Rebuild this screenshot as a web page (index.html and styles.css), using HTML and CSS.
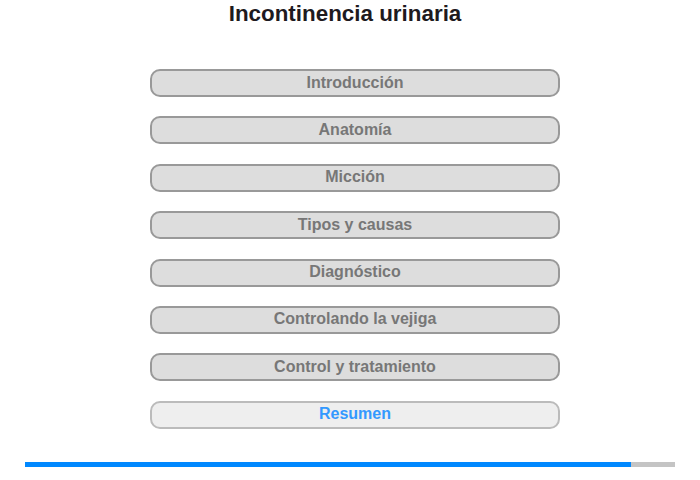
FILE: index.html
```html
<!DOCTYPE html>
<html lang="es">
<head>
    <meta charset="UTF-8">
    <meta name="viewport" content="width=device-width, initial-scale=1.0">
    <title>Incontinencia urinaria</title>
    <link rel="stylesheet" href="styles.css">
</head>
<body>

<h1 class="title">Incontinencia urinaria</h1>

<div class="menu">
    <button class="menu-btn">Introducción</button>
    <button class="menu-btn">Anatomía</button>
    <button class="menu-btn">Micción</button>
    <button class="menu-btn">Tipos y causas</button>
    <button class="menu-btn">Diagnóstico</button>
    <button class="menu-btn">Controlando la vejiga</button>
    <button class="menu-btn">Control y tratamiento</button>
    <button class="menu-btn current">Resumen</button>
</div>

<div class="progress">
    <div class="progress-fill" style="width: 93.2%;"></div>
</div>

</body>
</html>
```

FILE: styles.css
```css
body {
    font-family: "Liberation Sans", Arial, sans-serif;
    background-color: #ffffff;
    margin: 0;
    padding: 0;
}

.title {
    margin: 0;
    padding: 1px 10px 0 0;
    font-size: 22.4px;
    line-height: 26px;
    font-weight: bold;
    color: #1e1a1e;
    text-align: center;
}

.menu {
    display: flex;
    flex-direction: column;
    align-items: center;
    gap: 19.4px;
    margin-top: 42px;
    padding-left: 10px;
}

.menu-btn {
    display: block;
    width: 410px;
    height: 28px;
    padding: 0 0 1px 0;
    font-family: inherit;
    font-size: 16px;
    line-height: 22px;
    font-weight: bold;
    color: #777777;
    background-color: #dddddd;
    border: 2px solid #999999;
    border-radius: 10px;
    cursor: pointer;
}

.menu-btn.current {
    color: #3399ff;
    background-color: #eeeeee;
    border-color: #bbbbbb;
}

.progress {
    width: 650px;
    height: 5px;
    margin: 33px auto 0;
    background-color: #c4c4c4;
}

.progress-fill {
    height: 100%;
    background-color: #0088ff;
}
```
